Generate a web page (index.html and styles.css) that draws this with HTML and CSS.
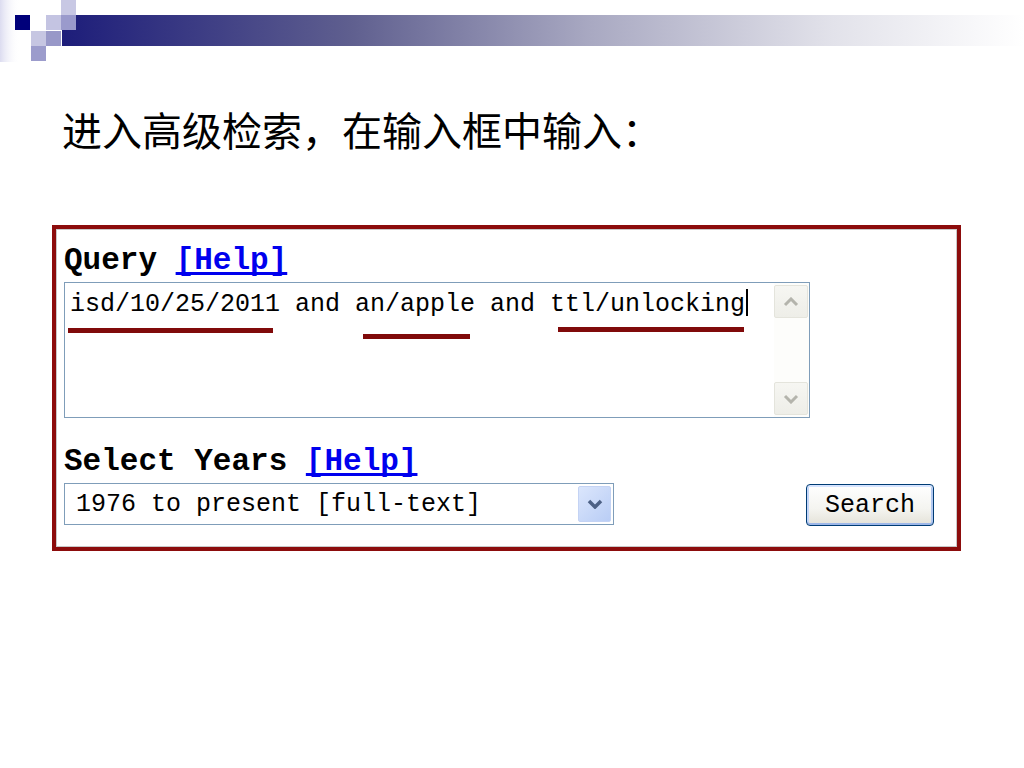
FILE: index.html
```html
<!DOCTYPE html>
<html lang="zh-CN">

<head>
    <meta charset="UTF-8">
    <title>进入高级检索</title>
    <link rel="stylesheet" href="styles.css">
</head>

<body>
    <!-- slide banner -->
    <svg class="banner" width="1024" height="62" viewBox="0 0 1024 62">
        <defs>
            <linearGradient id="barFade" x1="0" y1="0" x2="1" y2="0">
                <stop offset="0" stop-color="#1d1d7a" />
                <stop offset="0.3" stop-color="#5f5f8f" />
                <stop offset="0.55" stop-color="#a9a9c2" />
                <stop offset="0.8" stop-color="#e2e2ea" />
                <stop offset="1" stop-color="#ffffff" />
            </linearGradient>
            <linearGradient id="edgeFade" x1="0" y1="0" x2="1" y2="0">
                <stop offset="0" stop-color="#dcdcf0" />
                <stop offset="1" stop-color="#ffffff" stop-opacity="0" />
            </linearGradient>
        </defs>
        <rect x="0" y="0" width="20" height="62" fill="url(#edgeFade)" />
        <rect x="62" y="15" width="962" height="31" fill="url(#barFade)" />
        <rect x="15" y="15" width="15" height="15" fill="#00007a" />
        <rect x="61" y="0" width="15" height="15" fill="#c8c8e4" />
        <rect x="46" y="15" width="15" height="15" fill="#c4c4e2" />
        <rect x="61" y="15" width="15" height="15" fill="#9a9acc" />
        <rect x="31" y="31" width="15" height="15" fill="#c6c6e2" />
        <rect x="46" y="31" width="15" height="15" fill="#9898c8" />
        <rect x="31" y="46" width="15" height="15" fill="#9c9ccc" />
    </svg>

    <h1 class="title">进入高级检索，在输入框中输入：</h1>

    <div class="frame">
        <div class="label">Query <a href="#">[Help]</a></div>
        <div class="query-box">
            <div class="query-text">isd/10/25/2011 and an/apple and ttl/unlocking<span class="caret"></span></div>
            <span class="mark mark-isd"></span>
            <span class="mark mark-an"></span>
            <span class="mark mark-ttl"></span>
            <div class="scrollbar">
                <div class="scroll-btn">
                    <svg width="16" height="10" viewBox="0 0 16 10"><path d="M2 8 L8 2 L14 8" fill="none" stroke="#b4b4ac" stroke-width="3" /></svg>
                </div>
                <div class="scroll-track"></div>
                <div class="scroll-btn">
                    <svg width="16" height="10" viewBox="0 0 16 10"><path d="M2 2 L8 8 L14 2" fill="none" stroke="#b4b4ac" stroke-width="3" /></svg>
                </div>
            </div>
        </div>

        <div class="label years">Select Years <a href="#">[Help]</a></div>
        <div class="row">
            <div class="select">
                <span class="select-text">1976 to present [full-text]</span>
                <div class="drop-btn">
                    <svg width="16" height="10" viewBox="0 0 16 10"><path d="M2 2 L8 8 L14 2" fill="none" stroke="#4d6185" stroke-width="3.5" /></svg>
                </div>
            </div>
            <button class="search-btn">Search</button>
        </div>
    </div>
</body>

</html>
```

FILE: styles.css
```css
body {
    margin: 0;
    background: #ffffff;
    font-family: "Liberation Mono", monospace;
}

.banner {
    display: block;
}

/* Slide title */
.title {
    margin: 42px 0 0 62px;
    font-family: "Noto Sans CJK SC", sans-serif;
    font-weight: normal;
    font-size: 40px;
    line-height: 50px;
    color: #000000;
}

/* Screenshot frame */
.frame {
    margin: 71px 0 0 52px;
    border: 4px solid #8c0c0c;
    box-shadow: inset 0 0 0 1px #c8c8c8;
    padding: 12px 0 21px 8px;
    width: 893px;
}

.label {
    font-size: 31px;
    font-weight: bold;
    line-height: 40px;
    height: 41px;
    color: #000000;
}

.label a {
    color: #0000ee;
    text-decoration: underline;
    text-decoration-skip-ink: none;
    text-underline-offset: 3px;
}

.label.years {
    margin-top: 24px;
    height: 41px;
}

.query-box {
    position: relative;
    width: 744px;
    height: 134px;
    border: 1px solid #7f9db9;
    display: flex;
    justify-content: space-between;
}

.query-text {
    font-size: 25px;
    line-height: 28px;
    padding: 6px 0 0 5px;
    white-space: pre;
    color: #000000;
}

.caret {
    display: inline-block;
    width: 2px;
    height: 27px;
    background: #000000;
    vertical-align: -5px;
    margin-left: 1px;
}

/* Red underlines drawn over the query */
.mark {
    position: absolute;
    height: 5px;
    background: #800a0a;
}

.mark-isd {
    left: 3px;
    top: 45px;
    width: 205px;
}

.mark-an {
    left: 298px;
    top: 51px;
    width: 107px;
}

.mark-ttl {
    left: 493px;
    top: 44px;
    width: 186px;
}

.scrollbar {
    width: 34px;
    display: flex;
    flex-direction: column;
    padding: 2px 1px 2px 0;
    background: #fdfdfb;
}

.scroll-btn {
    height: 31px;
    background: linear-gradient(180deg, #f6f6f2 0%, #eeeee8 100%);
    border: 1px solid #e4e4dc;
    border-radius: 2px;
    display: flex;
    align-items: center;
    justify-content: center;
}

.scroll-track {
    flex: 1;
}

.row {
    display: flex;
    justify-content: space-between;
    align-items: flex-start;
    padding-right: 23px;
}

.select {
    width: 548px;
    height: 40px;
    border: 1px solid #7f9db9;
    display: flex;
    align-items: center;
    justify-content: space-between;
}

.select-text {
    font-size: 25px;
    padding-left: 11px;
    color: #000000;
}

.drop-btn {
    width: 33px;
    height: 36px;
    margin-right: 2px;
    background: linear-gradient(135deg, #dbe6fc 0%, #b9cdf5 100%);
    border: 1px solid #c4d3f4;
    border-radius: 2px;
    display: flex;
    align-items: center;
    justify-content: center;
    box-sizing: border-box;
}

.search-btn {
    width: 128px;
    height: 42px;
    margin-top: 1px;
    font-family: "Liberation Mono", monospace;
    font-size: 25px;
    color: #000000;
    background: linear-gradient(180deg, #ffffff 0%, #f4f4f0 60%, #e4e2d8 100%);
    border: 1px solid #003c74;
    border-radius: 4px;
    box-shadow: inset 0 -2px 0 #9db7e8, inset 0 2px 0 #d6e4ff, inset 2px 0 0 #c4d6f8, inset -2px 0 0 #b2c8f0;
    padding: 0;
}
```
